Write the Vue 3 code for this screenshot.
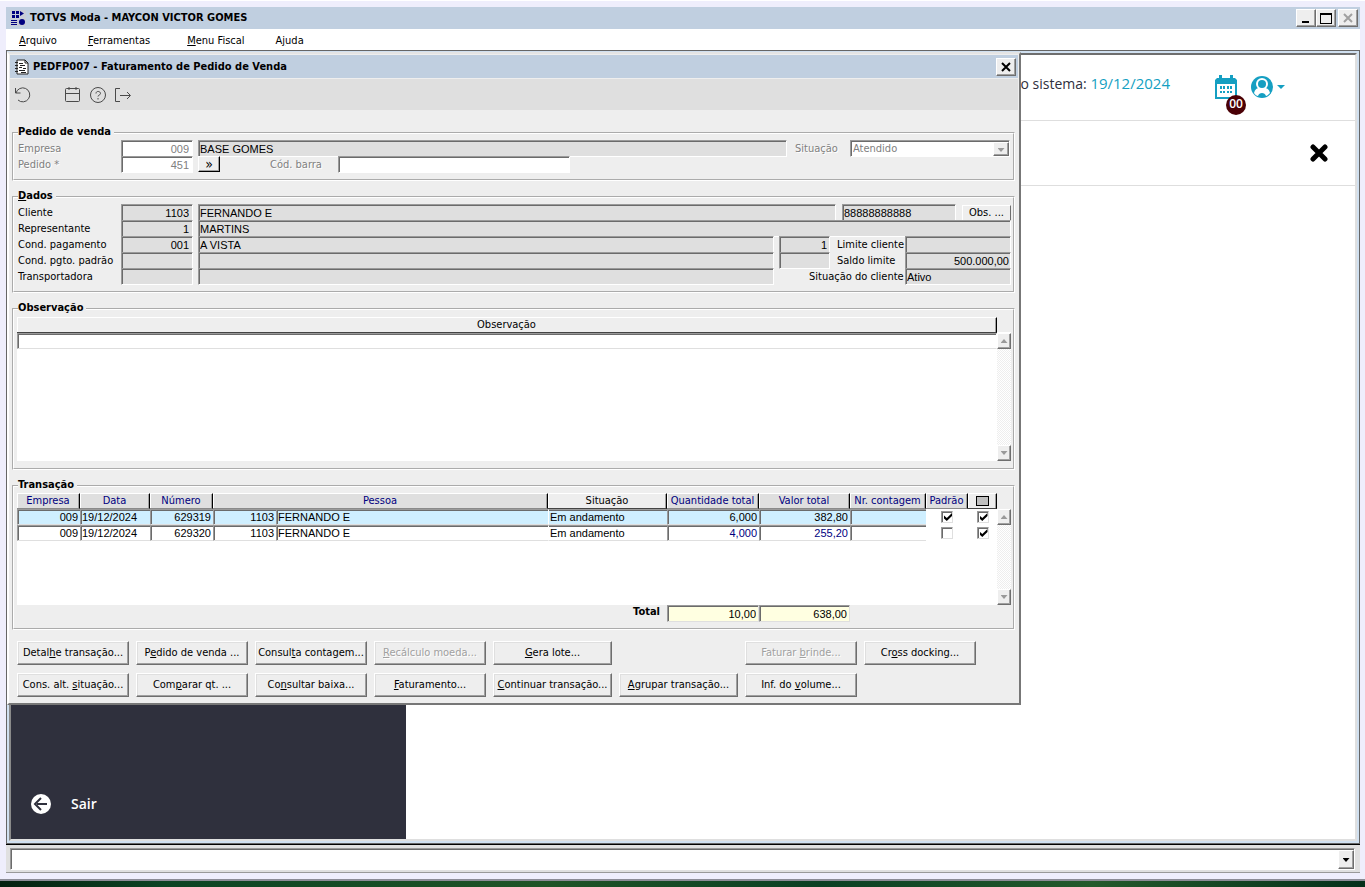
<script setup>
import { ref } from 'vue'

const menus = [
  { before: '', key: 'A', after: 'rquivo' },
  { before: '', key: 'F', after: 'erramentas' },
  { before: '', key: 'M', after: 'enu Fiscal' },
  { before: 'A', key: 'j', after: 'uda' }
]

let codBarra = ref('')
let observacao = ref('')

const transacoes = ref([
  { empresa: '009', data: '19/12/2024', numero: '629319', codigo: '1103', pessoa: 'FERNANDO E', situacao: 'Em andamento', quantidade: '6,000', valor: '382,80', contagem: '', padrao: true, marcado: true },
  { empresa: '009', data: '19/12/2024', numero: '629320', codigo: '1103', pessoa: 'FERNANDO E', situacao: 'Em andamento', quantidade: '4,000', valor: '255,20', contagem: '', padrao: false, marcado: true }
])
let selected = ref(0)

// null leaves the grid cell empty
const actions = [
  { before: 'Detal', key: 'h', after: 'e transação...' },
  { before: 'P', key: 'e', after: 'dido de venda ...' },
  { before: 'Consul', key: 't', after: 'a contagem...' },
  { before: '', key: 'R', after: 'ecálculo moeda...', disabled: true },
  { before: '', key: 'G', after: 'era lote...' },
  null,
  { before: 'Faturar ', key: 'b', after: 'rinde...', disabled: true },
  { before: 'Cr', key: 'o', after: 'ss docking...' },
  { before: 'Cons. alt. ', key: 's', after: 'ituação...' },
  { before: 'Com', key: 'p', after: 'arar qt. ...' },
  { before: 'Co', key: 'n', after: 'sultar baixa...' },
  { before: '', key: 'F', after: 'aturamento...' },
  { before: '', key: 'C', after: 'ontinuar transação...' },
  { before: '', key: 'A', after: 'grupar transação...' },
  { before: 'Inf. do ', key: 'v', after: 'olume...' }
]
</script>

<template>
  <div class="page">
    <div class="app">
      <header class="titlebar">
        <svg class="logo" viewBox="0 0 16 16" width="16" height="16">
          <rect width="16" height="16" fill="#c9cdd6" />
          <g fill="#000080">
            <rect x="2" y="1" width="3" height="3" /><rect x="6" y="1" width="3" height="3" />
            <rect x="2" y="5" width="3" height="3" /><rect x="6" y="5" width="3" height="3" />
            <path d="M10 1l4 2.500-4 2.500z" />
            <rect x="1" y="10" width="6" height="1" /><rect x="1" y="12" width="6" height="1" /><rect x="1" y="14" width="6" height="1" />
            <circle cx="12" cy="12" r="3" />
          </g>
        </svg>
        <h1>TOTVS Moda - MAYCON VICTOR GOMES</h1>
        <button class="win" aria-label="Minimizar">
          <svg viewBox="0 0 12 12" width="12" height="12"><rect x="2" y="9" width="7" height="2" /></svg>
        </button>
        <button class="win" aria-label="Maximizar">
          <svg viewBox="0 0 12 12" width="12" height="12"><path d="M0 1h12v11H0zM1 3v8h10V3z" fill-rule="evenodd" /></svg>
        </button>
        <button class="win last" aria-label="Fechar" disabled>
          <svg viewBox="0 0 12 12" width="12" height="12"><path d="M2 2l8 8M10 2l-8 8" stroke="#a0a0a0" stroke-width="2" /></svg>
        </button>
      </header>

      <nav class="menubar">
        <a v-for="m in menus" :key="m.after" href="#">{{ m.before }}<u>{{ m.key }}</u>{{ m.after }}</a>
      </nav>

      <main class="mdi">
        <div class="web">
          <aside class="sidebar">
            <a href="#" class="sair">
              <svg viewBox="0 0 20 20" width="20" height="20">
                <circle cx="10" cy="10" r="10" fill="#fff" />
                <path d="M16 10H6M10 4l-6 6 6 6" fill="none" stroke="#2f303d" stroke-width="2" />
              </svg>
              <span>Sair</span>
            </a>
          </aside>
          <section class="content">
            <div class="web-top">
              <span class="sistema">o sistema: <b>19/12/2024</b></span>
              <button class="calendar" aria-label="Calendário">
                <svg viewBox="0 0 22 24" width="22" height="24" fill="#159fc2">
                  <path d="M2 3h2V0h3v3h8V0h3v3h2l2 2v19H0V5zM2 9v13h18V9z" fill-rule="evenodd" />
                  <path d="M5 11h2v3H5zM8 11h2v3H8zM12 11h2v3h-2zM15 11h2v3h-2zM5 16h2v2H5zM8 16h2v2H8zM12 16h2v2h-2zM15 16h2v2h-2z" />
                </svg>
                <span class="badge">00</span>
              </button>
              <button class="user" aria-label="Usuário">
                <svg viewBox="0 0 22 22" width="22" height="22">
                  <circle cx="11" cy="11" r="11" fill="#159fc2" />
                  <path d="M3 17c1-4 3-5 6-5h4c3 0 5 1 6 5-2 2-3 3-4 3-1-4-7-4-8 0-1 0-3-1-4-3z" fill="#fff" />
                  <circle cx="11" cy="8" r="6" fill="#fff" />
                  <circle cx="11" cy="8" r="4" fill="#159fc2" />
                </svg>
                <svg viewBox="0 0 8 4" width="8" height="4"><path d="M0 0h8L4 4z" fill="#159fc2" /></svg>
              </button>
            </div>
            <div class="web-sub">
              <button aria-label="Fechar">
                <svg viewBox="0 0 18 18" width="18" height="18"><path d="M3 3l12 12M15 3L3 15" stroke="#000" stroke-width="5" stroke-linecap="round" /></svg>
              </button>
            </div>
          </section>
        </div>

        <section class="dialog">
          <header class="titlebar inner">
            <svg class="logo" viewBox="0 0 14 16" width="14" height="16">
              <path d="M2 1h8l3 3v11H2z" fill="#fff" stroke="#222" />
              <path d="M10 1v3h3M4 4.500h4M5 6.500h5M0 3.500h3M0 6.500h3M4 8.500h3M8 9.500h3M0 9.500h3M4 11.500h6M0 12.500h3M6 13.500h5" stroke="#222" fill="none" />
            </svg>
            <h2>PEDFP007 - Faturamento de Pedido de Venda</h2>
            <button class="win last" aria-label="Fechar janela">
              <svg viewBox="0 0 12 12" width="12" height="12"><path d="M2 2l8 8M10 2l-8 8" stroke="#000" stroke-width="2" /></svg>
            </button>
          </header>

          <div class="toolbar">
            <button aria-label="Desfazer">
              <svg viewBox="0 0 18 18" width="18" height="18"><path d="M1.500 2v5h5M2 7a7 7 0 1 1 2 7" /></svg>
            </button>
            <span class="space"></span>
            <button aria-label="Agenda">
              <svg viewBox="0 0 18 18" width="18" height="18"><rect x="1.500" y="2.500" width="14" height="13" rx="1" /><path d="M2 7.500h14M5 1v3M12 1v3" /></svg>
            </button>
            <button aria-label="Ajuda">
              <svg viewBox="0 0 18 18" width="18" height="18"><circle cx="9" cy="9" r="7.5" /><path d="M7 7.500c0-3 4.500-2.500 4.500 0C11.500 9 9 9 9 10.500M9 12v1.500" /></svg>
            </button>
            <button aria-label="Sair da tela">
              <svg viewBox="0 0 18 18" width="18" height="18"><path d="M6 2.500H1.500v13H6M6 9.500h10M13 6l3.500 3.500L13 13" /></svg>
            </button>
          </div>

          <div class="body">
            <fieldset>
              <legend>Pedido de venda</legend>
              <div class="row muted">
                <label for="empresa">Empresa</label>
                <input id="empresa" class="code white" value="009" disabled />
                <input class="grow" value="BASE GOMES" aria-label="Nome da empresa" readonly />
                <label for="situacao" class="situacao">Situação</label>
                <span class="combo">
                  <select id="situacao" disabled>
                    <option>Atendido</option>
                  </select>
                  <i class="arrow"></i>
                </span>
              </div>
              <div class="row muted">
                <label for="pedido">Pedido *</label>
                <input id="pedido" class="code white" value="451" disabled />
                <button class="search" aria-label="Pesquisar">»</button>
                <label for="codBarra" class="barra">Cód. barra</label>
                <input id="codBarra" class="white barcode" v-model="codBarra" />
              </div>
            </fieldset>

            <fieldset>
              <legend><u>D</u>ados</legend>
              <div class="row">
                <label for="cliente">Cliente</label>
                <input id="cliente" class="code" value="1103" readonly />
                <input class="grow" value="FERNANDO E" aria-label="Nome do cliente" readonly />
                <input class="doc" value="88888888888" aria-label="Documento" readonly />
                <button class="obs">Obs. ...</button>
              </div>
              <div class="row">
                <label for="representante">Representante</label>
                <input id="representante" class="code" value="1" readonly />
                <input class="grow" value="MARTINS" aria-label="Nome do representante" readonly />
              </div>
              <div class="row">
                <label for="pagamento">Cond. pagamento</label>
                <input id="pagamento" class="code" value="001" readonly />
                <input class="grow" value="A VISTA" aria-label="Descrição do pagamento" readonly />
                <input class="days" value="1" aria-label="Parcelas" readonly />
                <label for="limite" class="side">Limite cliente</label>
                <input id="limite" class="amount" readonly />
              </div>
              <div class="row">
                <label for="padrao">Cond. pgto. padrão</label>
                <input id="padrao" class="code" readonly />
                <input class="grow" aria-label="Descrição do pagamento padrão" readonly />
                <input class="days" aria-label="Parcelas padrão" readonly />
                <label for="saldo" class="side">Saldo limite</label>
                <input id="saldo" class="amount" value="500.000,00" readonly />
              </div>
              <div class="row">
                <label for="transportadora">Transportadora</label>
                <input id="transportadora" class="code" readonly />
                <input class="grow" aria-label="Nome da transportadora" readonly />
                <label for="ativo" class="side wide">Situação do cliente</label>
                <input id="ativo" class="amount left" value="Ativo" readonly />
              </div>
            </fieldset>

            <fieldset>
              <legend>Observação</legend>
              <div class="grid tall">
                <table>
                  <thead>
                    <tr><th class="plain">Observação</th></tr>
                  </thead>
                  <tbody>
                    <tr><td><input class="cell" v-model="observacao" aria-label="Observação" /></td></tr>
                  </tbody>
                </table>
                <div class="scroll">
                  <button aria-label="Subir" disabled><i class="up"></i></button>
                  <button aria-label="Descer" disabled><i class="down"></i></button>
                </div>
              </div>
            </fieldset>

            <fieldset>
              <legend>Transação</legend>
              <div class="grid">
                <table>
                  <colgroup>
                    <col class="w63" /><col class="w70" /><col class="w63" /><col class="w63" /><col />
                    <col class="w119" /><col class="w92" /><col class="w91" /><col class="w76" /><col class="w42" /><col class="w29" />
                  </colgroup>
                  <thead>
                    <tr>
                      <th>Empresa</th>
                      <th>Data</th>
                      <th>Número</th>
                      <th colspan="2">Pessoa</th>
                      <th class="plain">Situação</th>
                      <th>Quantidade total</th>
                      <th>Valor total</th>
                      <th>Nr. contagem</th>
                      <th>Padrão</th>
                      <th class="plain"><i class="square"></i></th>
                    </tr>
                  </thead>
                  <tbody>
                    <tr v-for="(t, i) in transacoes" :key="t.numero" :class="{ selected: i === selected }" @click="selected = i">
                      <td class="num">{{ t.empresa }}</td>
                      <td>{{ t.data }}</td>
                      <td class="num">{{ t.numero }}</td>
                      <td class="num">{{ t.codigo }}</td>
                      <td>{{ t.pessoa }}</td>
                      <td class="flat">{{ t.situacao }}</td>
                      <td class="num blue">{{ t.quantidade }}</td>
                      <td class="num blue">{{ t.valor }}</td>
                      <td>{{ t.contagem }}</td>
                      <td class="check"><input type="checkbox" v-model="t.padrao" aria-label="Padrão" /></td>
                      <td class="check"><input type="checkbox" v-model="t.marcado" aria-label="Selecionar" /></td>
                    </tr>
                  </tbody>
                </table>
                <div class="scroll">
                  <button aria-label="Subir" disabled><i class="up"></i></button>
                  <button aria-label="Descer" disabled><i class="down"></i></button>
                </div>
              </div>
              <div class="totals">
                <label for="totalQtd">Total</label>
                <input id="totalQtd" class="total w92" value="10,00" readonly />
                <input class="total w91" value="638,00" aria-label="Total valor" readonly />
              </div>
            </fieldset>

            <div class="actions">
              <template v-for="(a, i) in actions" :key="i">
                <button v-if="a" :disabled="a.disabled">{{ a.before }}<u>{{ a.key }}</u>{{ a.after }}</button>
                <span v-else></span>
              </template>
            </div>
          </div>
        </section>
      </main>

      <footer class="status">
        <span class="combo">
          <select aria-label="Mensagens">
            <option></option>
          </select>
          <i class="arrow"></i>
        </span>
      </footer>
    </div>
    <div class="wallpaper"></div>
  </div>
</template>

<style>
body {
  margin: 0;
}
</style>

<style scoped>
* {
  box-sizing: border-box;
}

.page {
  min-height: 100vh;
  display: flex;
  flex-direction: column;
  background: #efeefc;
  border-top: 1px solid #fff;
  font-family: 'DejaVu Sans Condensed', 'DejaVu Sans', sans-serif;
  font-size: 11px;
  line-height: 14px;
  color: #000;
}

button,
input,
select {
  font: inherit;
  color: inherit;
  margin: 0;
  padding: 0;
  border: 0;
  border-radius: 0;
  outline: none;
}

button {
  background: #eee;
  white-space: nowrap;
}

a {
  color: inherit;
  text-decoration: none;
}

i {
  display: block;
}

.app {
  flex: 1;
  display: flex;
  flex-direction: column;
  margin: 6px 5px 6px 6px;
}

.wallpaper {
  height: 8px;
  border-top: 2px solid #8c8c96;
  background: linear-gradient(90deg, #04200f, #0b4423 12%, #1f5426 40%, #0a4023 60%, #235a2b 80%, #04301a);
}

/* title bars */
.titlebar {
  display: flex;
  align-items: center;
  height: 22px;
  background: #c0cfe0;
  padding: 0 2px 0 4px;
}

.titlebar h1,
.titlebar h2 {
  flex: 1;
  margin: 0 0 0 4px;
  font-size: 11px;
  font-weight: bold;
}

.titlebar.inner {
  height: 23px;
  padding: 0 2px 0 5px;
}

.win {
  display: grid;
  place-items: center;
  width: 20px;
  height: 18px;
  border: 1px solid;
  border-color: #fff #6e6e6e #6e6e6e #fff;
  box-shadow: inset -1px -1px #a0a0a0;
}

.win.last {
  margin-left: 2px;
}

.menubar {
  display: flex;
  gap: 31px;
  height: 21px;
  padding: 4px 13px;
  background: #fff;
}

.menubar a {
  line-height: 15px;
}

.menubar a:nth-child(3) {
  margin-left: 6px;
}

/* workspace */
.mdi {
  position: relative;
  flex: 1;
  display: flex;
  padding: 2px;
  background: #d0e0f0;
  border: 1px solid #666;
}

.web {
  flex: 1;
  display: flex;
  background: #fff;
  border: 2px solid;
  border-color: #6e6e6e #dfdfdf #dfdfdf #8a8a8a;
}

.sidebar {
  display: flex;
  flex-direction: column;
  justify-content: flex-end;
  width: 395px;
  padding: 25px 20px;
  background: #2f303d;
}

.sair {
  display: flex;
  align-items: center;
  gap: 20px;
  color: #fff;
  font: 600 14px/20px 'Open Sans', sans-serif;
}

.content {
  flex: 1;
}

.content button {
  background: none;
}

.web-top {
  display: flex;
  justify-content: flex-end;
  align-items: center;
  height: 66px;
  padding: 0 70px 2px 0;
  border-bottom: 1px solid #dedede;
}

.sistema {
  margin-right: 45px;
  padding-bottom: 6px;
  font: 14px/20px 'Open Sans', sans-serif;
  color: #2f303d;
}

.sistema b {
  font-weight: normal;
  font-size: 15px;
  color: #159fc2;
}

.calendar {
  position: relative;
  margin-right: 14px;
}

.calendar svg,
.user svg {
  display: block;
}

.badge {
  position: absolute;
  left: 11px;
  top: 20px;
  width: 20px;
  height: 20px;
  border-radius: 50%;
  background: #4a0006;
  color: #fff;
  font: 600 12px/18px 'Open Sans', sans-serif;
}

.user {
  display: flex;
  align-items: center;
  gap: 4px;
}

.web-sub {
  display: flex;
  justify-content: flex-end;
  align-items: center;
  height: 65px;
  padding-right: 27px;
  border-bottom: 1px solid #dedede;
}

.web-sub svg {
  display: block;
}

/* dialog */
.dialog {
  position: absolute;
  left: 0;
  top: 1px;
  width: 75%;
  min-width: 1000px;
  background: #eee;
  border: 2px solid;
  border-color: #e4e4e4 #777 #777 #fff;
  padding: 1px;
}

.toolbar {
  display: flex;
  align-items: center;
  height: 31px;
  margin-top: 1px;
  background: #dfdfdf;
}

.toolbar button,
.toolbar .space {
  width: 25px;
  height: 18px;
  background: none;
}

.toolbar svg {
  display: block;
  margin: auto;
  fill: none;
  stroke: #4a4a4a;
}

.body {
  padding: 15px 3px 5px 2px;
}

fieldset {
  margin: 0 0 8px;
  padding: 0 2px 7px 3px;
  border: 2px groove #fff;
  min-width: 0;
}

legend {
  height: 15px;
  margin-left: 1px;
  padding: 0 3px 0 0;
  font-weight: bold;
}

.row {
  display: flex;
  height: 16px;
  padding-left: 1px;
}

.row label {
  line-height: 18px;
}

.row label:first-child {
  width: 103px;
}

.muted label,
.muted select,
input:disabled {
  color: #808080;
}

.muted label {
  text-shadow: 1px 1px #fff;
}

.row input,
.total,
.cell {
  height: 17px;
  padding: 1px 1px 0;
  background: #dfdfdf;
  border: 1px solid;
  border-color: #9a9a9a #fff #fff #9a9a9a;
  box-shadow: inset 1px 1px #6b6b6b;
  font-family: 'Liberation Sans', sans-serif;
}

.row input.white {
  background: #fff;
}

.row .code {
  width: 72px;
  margin-right: 5px;
  padding-right: 3px;
  text-align: right;
}

.row .grow {
  flex: 1;
  min-width: 0;
}

.situacao {
  width: 63px;
  padding-left: 8px;
}

.combo {
  position: relative;
  display: block;
  width: 160px;
  height: 17px;
  margin-right: 1px;
}

.combo select {
  appearance: none;
  display: block;
  width: 100%;
  height: 100%;
  padding-left: 2px;
  background: #fff;
  border: 1px solid;
  border-color: #9a9a9a #fff #fff #9a9a9a;
  box-shadow: inset 1px 1px #6b6b6b;
  opacity: 1;
}

.arrow {
  position: absolute;
  top: 2px;
  right: 1px;
  bottom: 1px;
  width: 16px;
  background: #eee;
  border: 1px solid;
  border-color: #fff #6e6e6e #6e6e6e #fff;
  box-shadow: inset -1px -1px #a0a0a0;
  pointer-events: none;
}

.arrow::after,
.down::after,
.up::after {
  content: '';
  display: block;
  width: 7px;
  height: 4px;
  margin: 5px auto 0;
  background: #999;
  clip-path: polygon(0 0, 100% 0, 50% 100%);
}

.up::after {
  margin: 0;
  clip-path: polygon(50% 0, 100% 100%, 0 100%);
}

.down::after {
  margin: 0;
}

.search {
  width: 22px;
  height: 16px;
  line-height: 12px;
  font-size: 14px;
  border: 1px solid;
  border-color: #fff #000 #000 #fff;
  box-shadow: inset -1px -1px #a0a0a0;
}

.barra {
  width: 118px;
  padding-left: 50px;
}

.row .barcode {
  width: 232px;
}

.row .doc {
  width: 114px;
  margin: 0 6px;
}

.obs {
  width: 49px;
  height: 16px;
  margin-top: 1px;
  line-height: 14px;
  border: 1px solid;
  border-color: #fff #6e6e6e #6e6e6e #fff;
}

.row .days {
  width: 51px;
  margin-left: 5px;
  padding-right: 2px;
  text-align: right;
}

.side {
  width: 75px;
  padding-left: 7px;
}

.side.wide {
  width: 131px;
  padding-left: 35px;
  white-space: nowrap;
}

.row .amount {
  width: 106px;
  text-align: right;
}

.row .amount.left {
  text-align: left;
}

/* data grids */
.grid {
  display: grid;
  grid-template-columns: 1fr 14px;
  align-items: start;
  height: 112px;
  background: linear-gradient(#eee 16px, #fff 16px);
}

.grid.tall {
  height: 145px;
  padding-top: 1px;
}

table {
  width: 100%;
  table-layout: fixed;
  border-collapse: separate;
  border-spacing: 0;
}

th {
  height: 16px;
  padding: 0;
  overflow: hidden;
  background: #dfdfdf;
  border-right: 1px solid #000;
  border-top: 1px solid #fff;
  border-bottom: 1px solid #8a8a8a;
  box-shadow: inset 1px 0 #fff, inset -1px 0 #a0a0a0;
  color: #000080;
  font-weight: normal;
  line-height: 14px;
  white-space: nowrap;
}

th.plain {
  background: #eee;
  border-bottom-color: #444;
  color: #000;
}

td {
  height: 16px;
  padding: 0 2px 0 1px;
  overflow: hidden;
  border: 1px solid;
  border-color: #9a9a9a #fff #fff #9a9a9a;
  border-right: 0;
  border-bottom: 1px solid #dfdfdf;
  box-shadow: inset 1px 1px #6b6b6b;
  font-family: 'Liberation Sans', sans-serif;
  white-space: nowrap;
}

.tall td {
  padding: 0;
  border: 0;
}

.cell {
  display: block;
  width: 100%;
  height: 16px;
  background: #fff;
  border-bottom-color: #dfdfdf;
}

.num {
  text-align: right;
}

td.flat {
  border-left-color: #fff;
  box-shadow: inset 0 1px #6b6b6b;
}

.selected td {
  background: #cfefff;
}

.blue {
  color: #000080;
}

.selected .blue {
  color: #000;
}

td.check,
.selected td.check {
  background: #fff;
  border-color: #fff;
  box-shadow: none;
}

.check input {
  appearance: none;
  display: block;
  width: 12px;
  height: 12px;
  margin: 0 auto;
  border: 1px solid;
  border-color: #9a9a9a #dfdfdf #dfdfdf #9a9a9a;
  box-shadow: inset 1px 1px #6b6b6b;
}

.check input:checked::before {
  content: '';
  display: block;
  width: 8px;
  height: 8px;
  margin: 1px 0 0 2px;
  background: #000;
  clip-path: polygon(0 30%, 35% 62%, 100% 0, 100% 38%, 35% 100%, 0 70%);
}

.square {
  width: 13px;
  height: 10px;
  margin: 0 auto;
  background: #c0c0c0;
  border: 1px solid #000;
}

.scroll {
  display: flex;
  flex-direction: column;
  justify-content: space-between;
  margin-top: 16px;
  height: calc(100% - 16px);
  background: repeating-conic-gradient(#fff 0 25%, #eee 0 50%) 0 0 / 2px 2px;
}

.scroll button {
  display: grid;
  place-items: center;
  width: 14px;
  height: 16px;
  border: 1px solid;
  border-color: #fff #6e6e6e #6e6e6e #fff;
  box-shadow: inset -1px -1px #a0a0a0;
}

.totals {
  display: flex;
  justify-content: flex-end;
  height: 16px;
  padding-right: 161px;
}

.totals label {
  padding-right: 7px;
  font-weight: bold;
}

.total {
  padding: 0 2px 0 0;
  background: #ffffe1;
  border-color: #9a9a9a #dfdfdf #dfdfdf #9a9a9a;
  text-align: right;
}

.w29 {
  width: 29px;
}

.w42 {
  width: 42px;
}

.w63 {
  width: 63px;
}

.w70 {
  width: 70px;
}

.w76 {
  width: 76px;
}

.w91 {
  width: 91px;
}

.w92 {
  width: 92px;
}

.w119 {
  width: 119px;
}

/* footer buttons */
.actions {
  display: grid;
  grid-template-columns: repeat(4, 112px) repeat(2, 119px) repeat(2, 112px);
  gap: 8px 7px;
  padding: 3px 5px 0;
}

.actions button {
  height: 24px;
  border: 1px solid;
  border-color: #fff #6e6e6e #6e6e6e #fff;
  box-shadow: inset -1px -1px #a0a0a0, inset 1px 1px #dfdfdf;
}

.actions button:disabled {
  color: #a0a0a0;
  text-shadow: 1px 1px #fff;
}

/* message bar */
.status {
  padding: 3px 5px 2px 4px;
  background: #e0e0e0;
  border-top: 1px solid #000;
  border-bottom: 1px solid #999;
}

.status .combo {
  width: 100%;
  height: 22px;
}

.status .arrow::after {
  margin-top: 7px;
  background: #000;
}
</style>
